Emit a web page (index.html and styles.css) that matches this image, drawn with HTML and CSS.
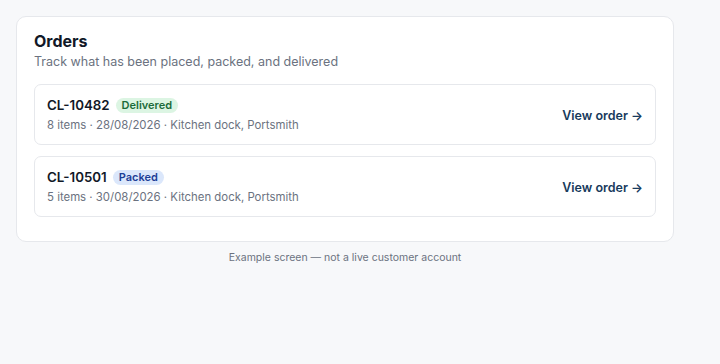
FILE: index.html
```html
<!DOCTYPE html>
<html lang="en">

<head>
    <meta charset="UTF-8">
    <meta name="viewport" content="width=device-width, initial-scale=1.0">
    <title>Orders</title>
    <link rel="stylesheet" href="styles.css">
</head>

<body>
    <main class="page">
        <section class="panel">
            <h1 class="panel-title">Orders</h1>
            <p class="panel-sub">Track what has been placed, packed, and delivered</p>
            <div class="order-list">
                <div class="order">
                    <div class="order-info">
                        <div class="order-head">
                            <span class="order-id">CL-10482</span>
                            <span class="badge badge-delivered">Delivered</span>
                        </div>
                        <div class="order-meta">8 items · 28/08/2026 · Kitchen dock, Portsmith</div>
                    </div>
                    <a class="order-link" href="#">View order →</a>
                </div>
                <div class="order">
                    <div class="order-info">
                        <div class="order-head">
                            <span class="order-id">CL-10501</span>
                            <span class="badge badge-packed">Packed</span>
                        </div>
                        <div class="order-meta">5 items · 30/08/2026 · Kitchen dock, Portsmith</div>
                    </div>
                    <a class="order-link" href="#">View order →</a>
                </div>
            </div>
        </section>
        <footer class="note">Example screen — not a live customer account</footer>
    </main>
</body>

</html>
```

FILE: styles.css
```css
body {
    font-family: Inter, "Noto Sans", sans-serif;
    background: #f7f8fa;
    color: #111827;
    margin: 0;
    padding: 0;
}

.page {
    width: 658px;
    padding: 16px;
}

.panel {
    background: #ffffff;
    border: 1px solid #e6e8ec;
    border-radius: 10px;
    padding: 13px 17px 24px;
}

.panel-title {
    font-size: 16px;
    font-weight: 700;
    line-height: 22px;
    margin: 0;
}

.panel-sub {
    font-size: 12.5px;
    color: #6b7280;
    line-height: 18px;
    margin: 1px 0 13px;
}

.order-list {
    display: flex;
    flex-direction: column;
    gap: 11px;
}

.order {
    display: flex;
    align-items: center;
    justify-content: space-between;
    border: 1px solid #e6e8ec;
    border-radius: 7px;
    padding: 11px 12px 10px;
}

.order-head {
    display: flex;
    align-items: center;
    gap: 6px;
}

.order-id {
    font-size: 13.3px;
    font-weight: 600;
    line-height: 18px;
}

.badge {
    font-size: 11px;
    font-weight: 600;
    line-height: 15px;
    padding: 0 6px;
    border-radius: 8px;
}

.badge-delivered {
    background: #dcf5e3;
    color: #1b6b3a;
}

.badge-packed {
    background: #dbe7fb;
    color: #1e3f96;
}

.order-meta {
    font-size: 11.4px;
    color: #6b7280;
    line-height: 17px;
    margin-top: 3px;
}

.order-link {
    font-size: 12.5px;
    font-weight: 600;
    color: #173a5c;
    text-decoration: none;
}

.note {
    font-size: 10.5px;
    color: #6b7280;
    line-height: 14px;
    text-align: center;
    margin-top: 9px;
}
```
